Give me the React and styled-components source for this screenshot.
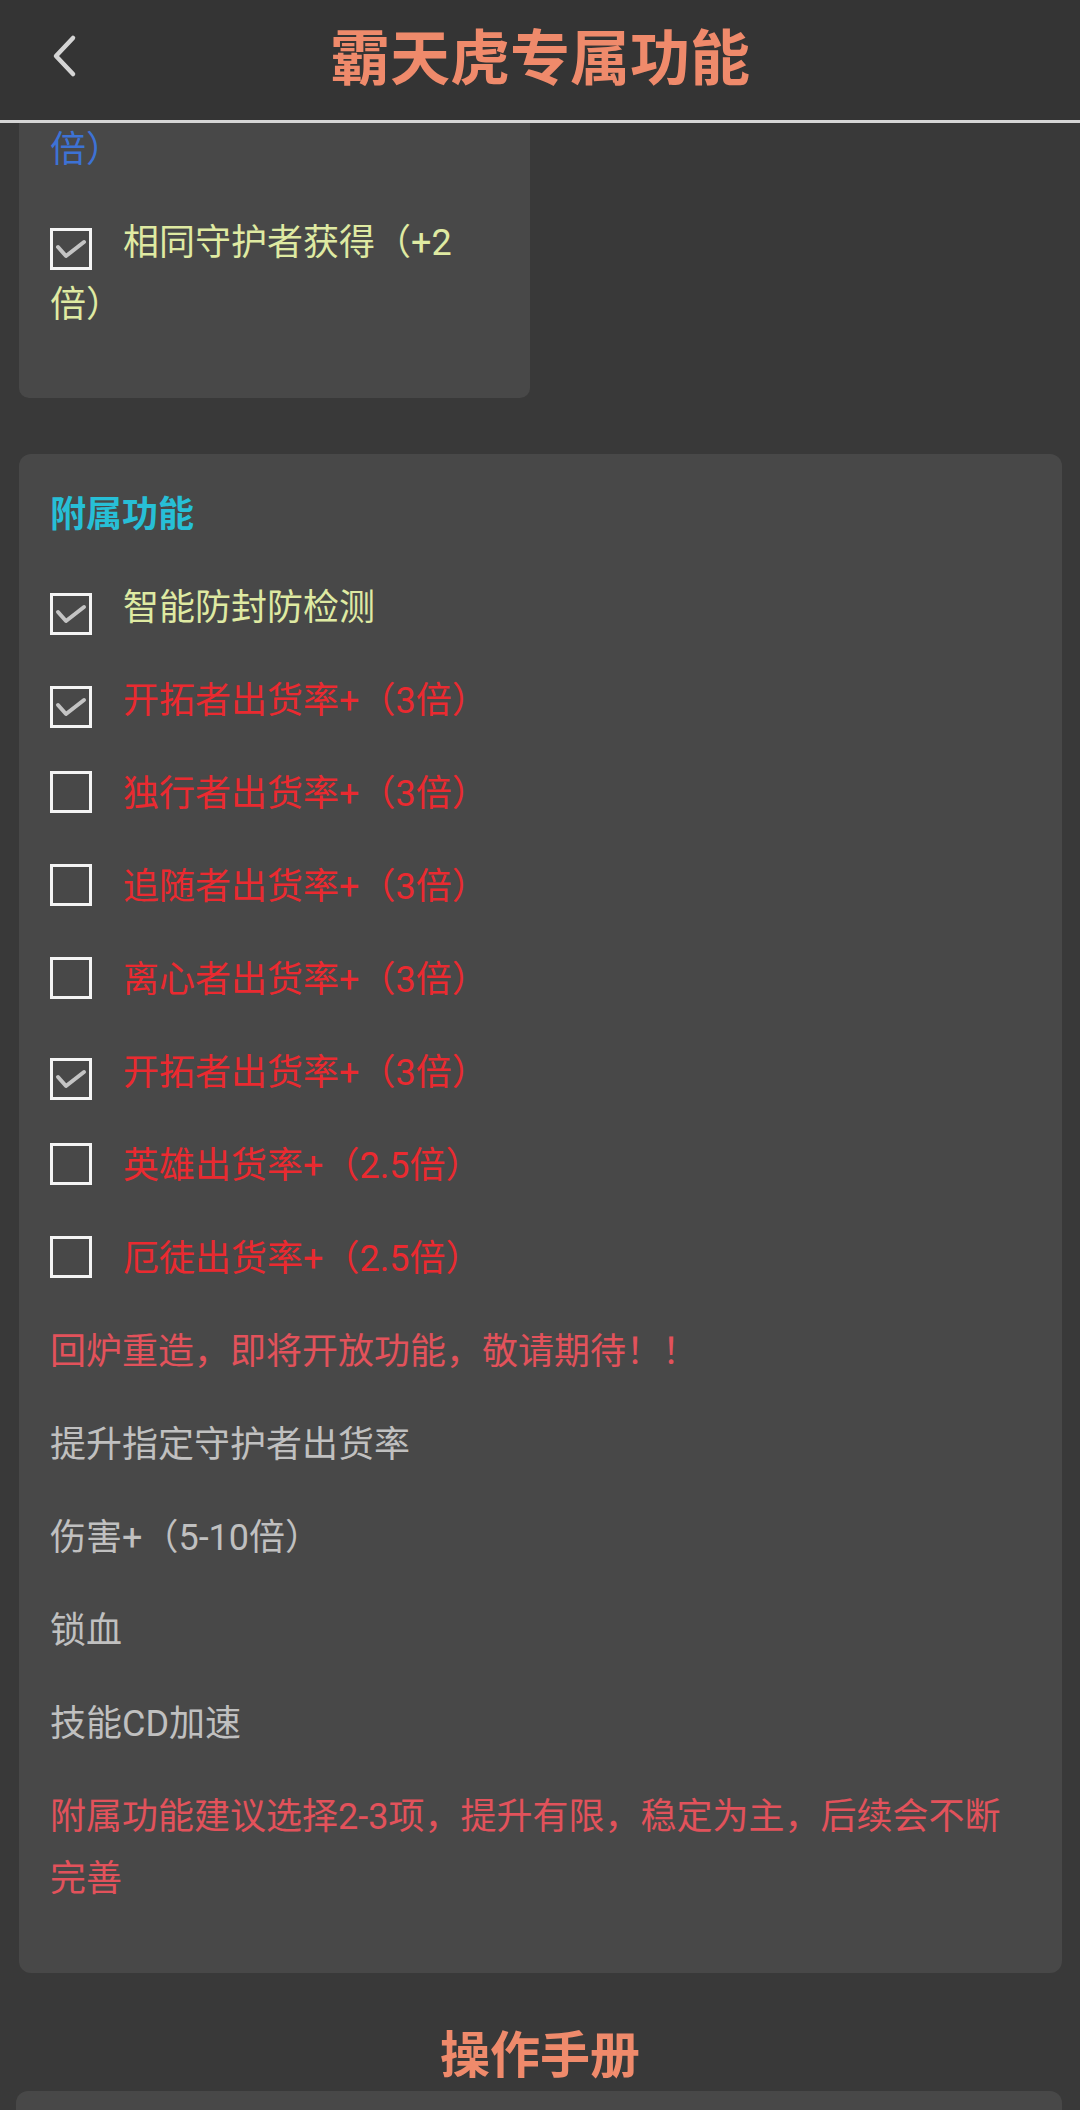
import React from 'react';
import styled, { createGlobalStyle } from 'styled-components';

const GlobalStyle = createGlobalStyle`
  html, body {
    margin: 0;
    padding: 0;
    background: #393939;
  }
  body {
    font-family: Roboto, "Noto Sans CJK SC", "Noto Sans", sans-serif;
  }
`;

const Page = styled.div`
  width: 1080px;
  height: 2110px;
  overflow: hidden;
  background: #393939;
`;

const Header = styled.header`
  height: 120px;
  display: grid;
  grid-template-columns: 120px 1fr 120px;
  align-items: center;
  background: #343434;
  border-bottom: 3px solid #d6d6d6;
`;

const BackButton = styled.button`
  justify-self: start;
  margin-left: 50px;
  margin-top: -8px;
  padding: 0;
  border: none;
  background: none;
  display: flex;
`;

const HeaderTitle = styled.h1`
  margin: -14px 0 0;
  text-align: center;
  font-size: 60px;
  font-weight: 700;
  color: #ef8a6b;
  letter-spacing: 0;
`;

const Content = styled.main`
  display: flex;
  flex-direction: column;
`;

const Card = styled.section`
  box-sizing: border-box;
  margin: ${(p) => p.$margin || '0 18px 0 19px'};
  width: ${(p) => p.$width || 'auto'};
  padding: ${(p) => p.$padding || '30px 31px 63px'};
  background: #484848;
  border-radius: ${(p) => p.$radius || '12px'};
  display: flex;
  flex-direction: column;
  gap: 31px;
  overflow: hidden;
`;

const Line = styled.p`
  margin: 0;
  font-size: 36px;
  line-height: 62px;
  color: ${(p) => p.$color || '#c2c2c2'};
  font-weight: ${(p) => (p.$bold ? 700 : 400)};
`;

const ClippedLine = styled(Line)`
  margin-top: -4px;
`;

const Label = styled.label`
  display: block;
  font-size: 36px;
  line-height: 62px;
  color: ${(p) => p.$color};
`;

const Box = styled.span`
  display: inline-flex;
  align-items: center;
  justify-content: center;
  box-sizing: border-box;
  width: 42px;
  height: 42px;
  margin-right: 31px;
  vertical-align: -7px;
  border: 3.5px solid #f4f4f4;
`;

const SectionTitle = styled.h2`
  margin: 48px 0 0;
  height: 70px;
  text-align: center;
  font-size: 50px;
  line-height: 70px;
  font-weight: 700;
  color: #ef8a6b;
`;

const Chevron = () => (
  <svg width="28" height="44" viewBox="0 0 28 44">
    <polyline
      points="23,4 6,22 23,40"
      fill="none"
      stroke="#d4d4d4"
      strokeWidth="4.5"
      strokeLinecap="round"
      strokeLinejoin="round"
    />
  </svg>
);

const Check = () => (
  <svg width="32" height="26" viewBox="0 0 32 26">
    <polyline
      points="3,11 11,20 29,6"
      fill="none"
      stroke="#d2d2d2"
      strokeWidth="4"
      strokeLinecap="round"
      strokeLinejoin="round"
      opacity="0.9"
    />
  </svg>
);

const CheckItem = ({ checked, color, children }) => (
  <Label $color={color}>
    <Box>{checked && <Check />}</Box>
    {children}
  </Label>
);

const YELLOW = '#dfeaa2';
const RED = '#ea2a30';
const PINK = '#e2525b';
const GREY = '#c0c0c0';

const options = [
  { text: '开拓者出货率+（3倍）', checked: true },
  { text: '独行者出货率+（3倍）', checked: false },
  { text: '追随者出货率+（3倍）', checked: false },
  { text: '离心者出货率+（3倍）', checked: false },
  { text: '开拓者出货率+（3倍）', checked: true },
  { text: '英雄出货率+（2.5倍）', checked: false },
  { text: '厄徒出货率+（2.5倍）', checked: false },
];

const notes = ['提升指定守护者出货率', '伤害+（5-10倍）', '锁血', '技能CD加速'];

const App = () => {
  return (
    <Page>
      <GlobalStyle />
      <Header>
        <BackButton>
          <Chevron />
        </BackButton>
        <HeaderTitle>霸天虎专属功能</HeaderTitle>
        <span />
      </Header>

      <Content>
        <Card $width="511px" $margin="0 0 0 19px" $padding="0 31px 62px" $radius="0 0 10px 10px">
          <ClippedLine $color="#3d72d4">倍）</ClippedLine>
          <CheckItem checked color={YELLOW}>
            相同守护者获得（+2倍）
          </CheckItem>
        </Card>

        <Card $margin="56px 18px 0 19px">
          <Line $bold $color="#27bfd6">附属功能</Line>
          <CheckItem checked color={YELLOW}>智能防封防检测</CheckItem>
          {options.map((o, i) => (
            <CheckItem key={i} checked={o.checked} color={RED}>
              {o.text}
            </CheckItem>
          ))}
          <Line $color={PINK}>回炉重造，即将开放功能，敬请期待！！</Line>
          {notes.map((n) => (
            <Line key={n} $color={GREY}>{n}</Line>
          ))}
          <Line $color={PINK}>附属功能建议选择2-3项，提升有限，稳定为主，后续会不断完善</Line>
        </Card>

        <SectionTitle>操作手册</SectionTitle>
        <Card $margin="0 18px 0 16px" $padding="30px 31px">
          <Line $color={GREY}>&nbsp;</Line>
        </Card>
      </Content>
    </Page>
  );
};

export default App;
